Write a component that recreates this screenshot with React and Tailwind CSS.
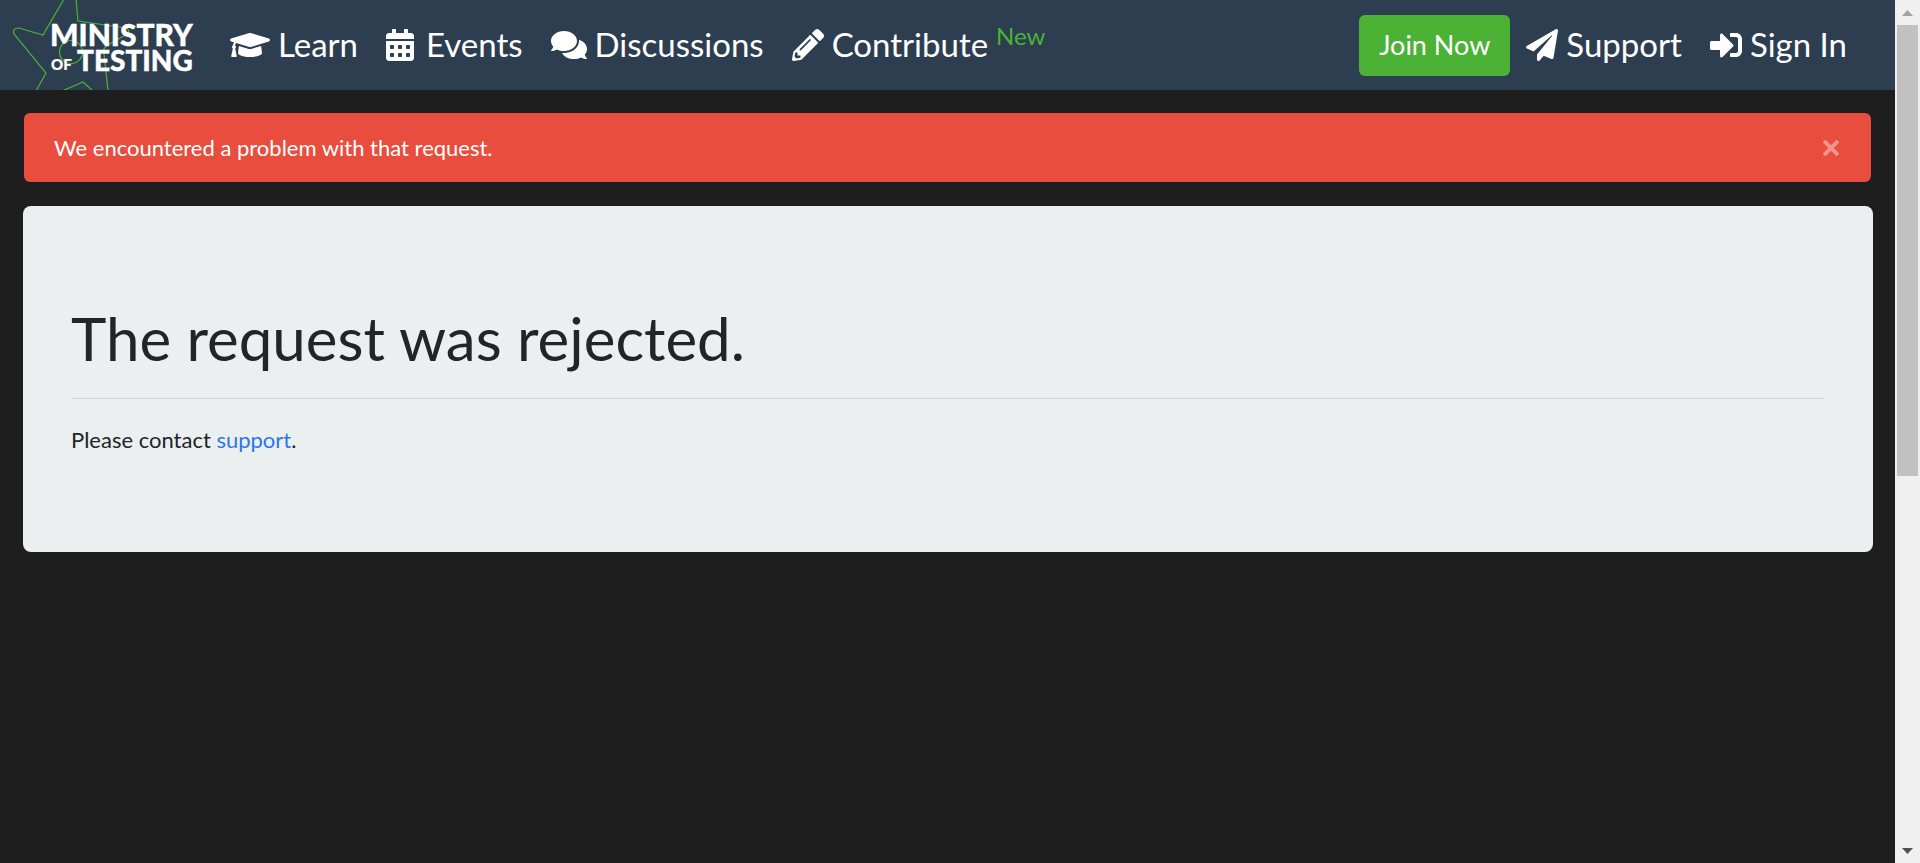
import {
  FaCalendarAlt,
  FaComments,
  FaGraduationCap,
  FaPaperPlane,
  FaPencilAlt,
  FaSignInAlt,
} from "react-icons/fa";

function Logo() {
  return (
    <a href="#" aria-label="Ministry of Testing" className="block shrink-0">
      <svg width="202" height="90" viewBox="0 0 202 90">
        <g fill="none" stroke="#4bb236" strokeWidth="1.2">
          <path d="M64 -1 L43 35 L19 28 Q12 28 14 34 L46 73 L36 91" />
          <path d="M76 -1 L78 21 L126 28 Q131 30 127 34 L106 46 Q102 50 104 54 L108 91" />
          <path d="M62 91 L83 82 L93 91" />
          <ellipse cx="71" cy="52" rx="11.500" ry="11.500" />
        </g>
        <g fill="#fff" stroke="#fff" strokeWidth="0.4" fontFamily="Lato, sans-serif" fontWeight="900">
          <text x="50" y="46" fontSize="30">MINISTRY</text>
          <text x="51" y="70" fontSize="15" strokeWidth="0.2">OF</text>
          <text x="77" y="71" fontSize="28">TESTING</text>
        </g>
      </svg>
    </a>
  );
}

function NavLink({ icon: Icon, label, badge, gap = "gap-2", iconWidth = "w-8" }) {
  return (
    <a href="#" className={"flex items-center whitespace-nowrap text-[33px] leading-[48px] " + gap}>
      <Icon className={"h-8 shrink-0 " + iconWidth} />
      <span className="pb-[2px]">
        {label}
        {badge && <sup className="-top-3 ml-2 text-2xl leading-none text-[#4bb236]">{badge}</sup>}
      </span>
    </a>
  );
}

function Navbar() {
  return (
    <nav className="flex h-[90px] items-center justify-between bg-[#2d3e50] pr-12">
      <div className="flex items-center gap-7">
        <Logo />
        <NavLink icon={FaGraduationCap} label="Learn" iconWidth="w-10" />
        <NavLink icon={FaCalendarAlt} label="Events" gap="gap-3" iconWidth="w-7" />
        <NavLink icon={FaComments} label="Discussions" iconWidth="w-9" />
        <NavLink icon={FaPencilAlt} label="Contribute" badge="New" />
      </div>
      <div className="flex items-center">
        <a href="#" className="mr-4 rounded-md bg-[#4bb236] px-5 pb-[13px] pt-[11px] text-[27px] leading-[37px]">
          Join Now
        </a>
        <div className="flex items-center gap-7">
          <NavLink icon={FaPaperPlane} label="Support" />
          <NavLink icon={FaSignInAlt} label="Sign In" />
        </div>
      </div>
    </nav>
  );
}

function ScrollRail() {
  return (
    <div aria-hidden="true" className="sticky top-0 flex h-screen w-[25px] shrink-0 flex-col items-center bg-[#f0f0f0]">
      <div className="flex h-[25px] shrink-0 items-center">
        <svg width="11" height="6" viewBox="0 0 11 6"><path d="M0 6 L5.500 0 L11 6Z" fill="#a3a3a3" /></svg>
      </div>
      <div className="flex w-full flex-1 flex-col px-[2px]">
        <div className="h-[55.500%] bg-[#c1c1c1]" />
      </div>
      <div className="flex h-[25px] shrink-0 items-center">
        <svg width="11" height="6" viewBox="0 0 11 6"><path d="M0 0 L5.500 6 L11 0Z" fill="#505050" /></svg>
      </div>
    </div>
  );
}

export default function App() {
  return (
    <div className="flex min-h-screen bg-[#1e1e1e] font-['Lato',sans-serif]">
      <div className="min-w-0 flex-1 text-white">
        <Navbar />
        <main>
          <div role="alert" className="mx-6 mt-[23px] flex items-center justify-between rounded-md bg-[#e84d3d] py-4 pl-[30px] pr-8 text-[22px] leading-[37px]">
            <span>We encountered a problem with that request.</span>
            <button type="button" aria-label="Close" className="opacity-40">
              <svg width="16" height="16" viewBox="0 0 16 16" stroke="#fff" strokeWidth="4">
                <path d="M1 1 L15 15 M15 1 L1 15" />
              </svg>
            </button>
          </div>
          <section className="ml-[23px] mr-[22px] mt-6 rounded-lg bg-[#ebeff0] px-12 py-24 text-[#212529]">
            <h1 className="text-[60px] leading-[72px]">The request was rejected.</h1>
            <hr className="my-6 border-[#d3d7d8]" />
            <p className="text-[22px] leading-[33px]">
              Please contact <a href="#" className="text-[#2b78e4]">support</a>.
            </p>
          </section>
        </main>
      </div>
      <ScrollRail />
    </div>
  );
}
